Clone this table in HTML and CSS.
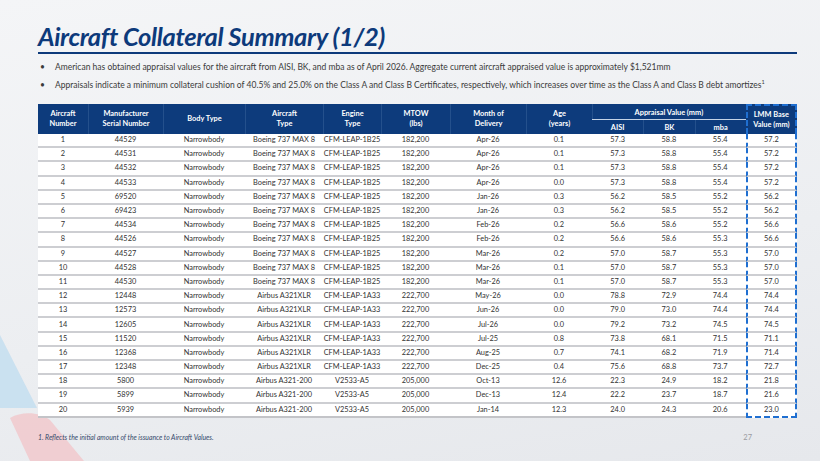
FILE: index.html
```html
<!DOCTYPE html>
<html lang="en-US">
  <head>
  <meta charset="utf-8">
  <title>Aircraft Collateral Summary (1/2)</title>
  <link rel="stylesheet" href="styles.css">
  </head>
  <body>
    <svg class="watermark" width="120" height="160" viewBox="0 0 120 160">
      <path d="M0 34 L0 107 L37 107 Z" fill="#c4def0" opacity="0.85"/>
      <path d="M10 117 C22 110 40 111 50 119 L84 160 L30 160 Z" fill="#f1c7cb" opacity="0.8"/>
    </svg>
    <div id="slide">
      <h1 class="title">Aircraft Collateral Summary (1/2)</h1>

      <ul class="bullets">
        <li>American has obtained appraisal values for the aircraft from AISI, BK, and mba as of April 2026. Aggregate current aircraft appraised value is approximately $1,521mm</li>
        <li>Appraisals indicate a minimum collateral cushion of 40.5% and 25.0% on the Class A and Class B Certificates, respectively, which increases over time as the Class A and Class B debt amortizes<sup>1</sup></li>
      </ul>

      <table class="summary">
        <thead>
          <tr>
            <th rowspan="2" class="c-num">Aircraft<br>Number</th>
            <th rowspan="2" class="c-msn">Manufacturer<br>Serial Number</th>
            <th rowspan="2" class="c-body">Body Type</th>
            <th rowspan="2" class="c-type">Aircraft<br>Type</th>
            <th rowspan="2" class="c-eng">Engine<br>Type</th>
            <th rowspan="2" class="c-mtow">MTOW<br>(lbs)</th>
            <th rowspan="2" class="c-del">Month of<br>Delivery</th>
            <th rowspan="2" class="c-age">Age<br>(years)</th>
            <th colspan="3" class="group"><span>Appraisal Value (mm)</span></th>
            <th rowspan="2" class="lmm">LMM Base<br>Value (mm)</th>
          </tr>
          <tr class="sub">
            <th class="c-val">AISI</th>
            <th class="c-val">BK</th>
            <th class="c-val">mba</th>
          </tr>
        </thead>
        <tbody>
          <tr><td>1</td><td>44529</td><td>Narrowbody</td><td>Boeing 737 MAX 8</td><td>CFM-LEAP-1B25</td><td>182,200</td><td>Apr-26</td><td>0.1</td><td>57.3</td><td>58.8</td><td>55.4</td><td class="lmm">57.2</td></tr>
          <tr><td>2</td><td>44531</td><td>Narrowbody</td><td>Boeing 737 MAX 8</td><td>CFM-LEAP-1B25</td><td>182,200</td><td>Apr-26</td><td>0.1</td><td>57.3</td><td>58.8</td><td>55.4</td><td class="lmm">57.2</td></tr>
          <tr><td>3</td><td>44532</td><td>Narrowbody</td><td>Boeing 737 MAX 8</td><td>CFM-LEAP-1B25</td><td>182,200</td><td>Apr-26</td><td>0.1</td><td>57.3</td><td>58.8</td><td>55.4</td><td class="lmm">57.2</td></tr>
          <tr><td>4</td><td>44533</td><td>Narrowbody</td><td>Boeing 737 MAX 8</td><td>CFM-LEAP-1B25</td><td>182,200</td><td>Apr-26</td><td>0.0</td><td>57.3</td><td>58.8</td><td>55.4</td><td class="lmm">57.2</td></tr>
          <tr><td>5</td><td>69520</td><td>Narrowbody</td><td>Boeing 737 MAX 8</td><td>CFM-LEAP-1B25</td><td>182,200</td><td>Jan-26</td><td>0.3</td><td>56.2</td><td>58.5</td><td>55.2</td><td class="lmm">56.2</td></tr>
          <tr><td>6</td><td>69423</td><td>Narrowbody</td><td>Boeing 737 MAX 8</td><td>CFM-LEAP-1B25</td><td>182,200</td><td>Jan-26</td><td>0.3</td><td>56.2</td><td>58.5</td><td>55.2</td><td class="lmm">56.2</td></tr>
          <tr><td>7</td><td>44534</td><td>Narrowbody</td><td>Boeing 737 MAX 8</td><td>CFM-LEAP-1B25</td><td>182,200</td><td>Feb-26</td><td>0.2</td><td>56.6</td><td>58.6</td><td>55.2</td><td class="lmm">56.6</td></tr>
          <tr><td>8</td><td>44526</td><td>Narrowbody</td><td>Boeing 737 MAX 8</td><td>CFM-LEAP-1B25</td><td>182,200</td><td>Feb-26</td><td>0.2</td><td>56.6</td><td>58.6</td><td>55.3</td><td class="lmm">56.6</td></tr>
          <tr><td>9</td><td>44527</td><td>Narrowbody</td><td>Boeing 737 MAX 8</td><td>CFM-LEAP-1B25</td><td>182,200</td><td>Mar-26</td><td>0.2</td><td>57.0</td><td>58.7</td><td>55.3</td><td class="lmm">57.0</td></tr>
          <tr><td>10</td><td>44528</td><td>Narrowbody</td><td>Boeing 737 MAX 8</td><td>CFM-LEAP-1B25</td><td>182,200</td><td>Mar-26</td><td>0.1</td><td>57.0</td><td>58.7</td><td>55.3</td><td class="lmm">57.0</td></tr>
          <tr><td>11</td><td>44530</td><td>Narrowbody</td><td>Boeing 737 MAX 8</td><td>CFM-LEAP-1B25</td><td>182,200</td><td>Mar-26</td><td>0.1</td><td>57.0</td><td>58.7</td><td>55.3</td><td class="lmm">57.0</td></tr>
          <tr><td>12</td><td>12448</td><td>Narrowbody</td><td>Airbus A321XLR</td><td>CFM-LEAP-1A33</td><td>222,700</td><td>May-26</td><td>0.0</td><td>78.8</td><td>72.9</td><td>74.4</td><td class="lmm">74.4</td></tr>
          <tr><td>13</td><td>12573</td><td>Narrowbody</td><td>Airbus A321XLR</td><td>CFM-LEAP-1A33</td><td>222,700</td><td>Jun-26</td><td>0.0</td><td>79.0</td><td>73.0</td><td>74.4</td><td class="lmm">74.4</td></tr>
          <tr><td>14</td><td>12605</td><td>Narrowbody</td><td>Airbus A321XLR</td><td>CFM-LEAP-1A33</td><td>222,700</td><td>Jul-26</td><td>0.0</td><td>79.2</td><td>73.2</td><td>74.5</td><td class="lmm">74.5</td></tr>
          <tr><td>15</td><td>11520</td><td>Narrowbody</td><td>Airbus A321XLR</td><td>CFM-LEAP-1A33</td><td>222,700</td><td>Jul-25</td><td>0.8</td><td>73.8</td><td>68.1</td><td>71.5</td><td class="lmm">71.1</td></tr>
          <tr><td>16</td><td>12368</td><td>Narrowbody</td><td>Airbus A321XLR</td><td>CFM-LEAP-1A33</td><td>222,700</td><td>Aug-25</td><td>0.7</td><td>74.1</td><td>68.2</td><td>71.9</td><td class="lmm">71.4</td></tr>
          <tr><td>17</td><td>12348</td><td>Narrowbody</td><td>Airbus A321XLR</td><td>CFM-LEAP-1A33</td><td>222,700</td><td>Dec-25</td><td>0.4</td><td>75.6</td><td>68.8</td><td>73.7</td><td class="lmm">72.7</td></tr>
          <tr><td>18</td><td>5800</td><td>Narrowbody</td><td>Airbus A321-200</td><td>V2533-A5</td><td>205,000</td><td>Oct-13</td><td>12.6</td><td>22.3</td><td>24.9</td><td>18.2</td><td class="lmm">21.8</td></tr>
          <tr><td>19</td><td>5899</td><td>Narrowbody</td><td>Airbus A321-200</td><td>V2533-A5</td><td>205,000</td><td>Dec-13</td><td>12.4</td><td>22.2</td><td>23.7</td><td>18.7</td><td class="lmm">21.6</td></tr>
          <tr class="last"><td>20</td><td>5939</td><td>Narrowbody</td><td>Airbus A321-200</td><td>V2533-A5</td><td>205,000</td><td>Jan-14</td><td>12.3</td><td>24.0</td><td>24.3</td><td>20.6</td><td class="lmm">23.0</td></tr>
        </tbody>
      </table>

      <div class="footer">
        <div class="footnote">1. Reflects the initial amount of the issuance to Aircraft Values.</div>
        <div class="page-num">27</div>
      </div>
    </div>
  </body>
</html>
```

FILE: styles.css
```css
html, body {
  margin: 0;
  padding: 0;
}

body {
  width: 820px;
  height: 461px;
  overflow: hidden;
  position: relative;
  color: #333333;
  font-family: Lato, "Open Sans", sans-serif;
  background: linear-gradient(170deg, #f4f5f7 0%, #eceef1 60%, #e6e8ec 100%);
}

.watermark {
  position: absolute;
  left: 0;
  top: 301px;
}

#slide {
  position: relative;
  padding: 23px 23px 0 38px;
}

.title {
  margin: 0;
  padding-bottom: 2px;
  color: #0d3a7b;
  font-size: 25.5px;
  font-weight: 700;
  font-style: italic;
  letter-spacing: -0.35px;
  line-height: 27px;
  border-bottom: 2px solid #0d3a7b;
}

.bullets {
  list-style: none;
  margin: 4px 0 0 0;
  padding: 0;
}

.bullets li {
  position: relative;
  padding-left: 17px;
  font-size: 8.5px;
  line-height: 18px;
  color: #3a3a3a;
}

.bullets li::before {
  content: "\2022";
  position: absolute;
  left: 2px;
}

.bullets sup {
  font-size: 5.5px;
  line-height: 0;
}

.summary {
  margin-top: 10px;
  width: 759px;
  border-collapse: separate;
  border-spacing: 0;
  table-layout: fixed;
  font-size: 7.4px;
}

.summary th {
  background: #0d3b7c;
  color: #ffffff;
  font-weight: 700;
  line-height: 10px;
  padding: 0;
  text-align: center;
  vertical-align: middle;
  border-left: 1px solid #24508c;
}

.summary thead tr:first-child th {
  height: 16px;
}

.summary thead tr.sub th {
  height: 13px;
}

.summary th:first-child {
  border-left: none;
}

.summary th.group {
  vertical-align: bottom;
}

.summary th.group span {
  display: block;
  margin: 0 0 0 -1px;
  padding-bottom: 1px;
  border-bottom: 1px solid #c5d3e6;
}

.summary tr.sub th {
  padding-top: 1px;
}

.c-num { width: 50px; }
.c-msn { width: 74px; }
.c-body { width: 81px; }
.c-type { width: 77px; }
.c-eng { width: 57px; }
.c-mtow { width: 68px; }
.c-del { width: 75px; }
.c-age { width: 65px; }
.c-val { width: 53px; }

.summary td {
  background: #ffffff;
  height: 12.2px;
  padding: 0;
  text-align: center;
  line-height: 12px;
  border-bottom: 2px solid #cdced2;
}

.summary .lmm {
  border-left: 2px dashed #1f6fd1;
  border-right: 2px dashed #1f6fd1;
}

.summary th.lmm {
  border-top: 2px dashed #1f6fd1;
}

.summary tr.last td {
  border-bottom: 2px solid #c3c4c8;
}

.summary tr.last td.lmm {
  border-bottom: 2px dashed #1f6fd1;
}

.footer {
  display: flex;
  justify-content: space-between;
  align-items: baseline;
  margin-top: 15px;
  padding-right: 45px;
}

.footnote {
  font-size: 6.8px;
  font-style: italic;
  color: #34496b;
}

.page-num {
  font-size: 7.5px;
  color: #9a9ca1;
}
```
